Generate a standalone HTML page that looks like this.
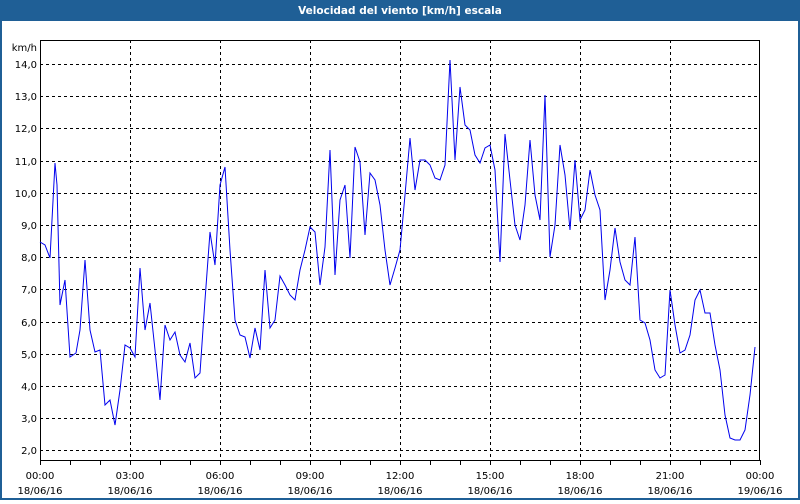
<!DOCTYPE html><html><head><style>body{margin:0;width:800px;height:500px;overflow:hidden;background:#fff;font-family:"DejaVu Sans","Liberation Sans",sans-serif}</style></head><body>
<svg width="800" height="500" xmlns="http://www.w3.org/2000/svg" font-family="DejaVu Sans, Liberation Sans, sans-serif" font-size="10">
<rect x="0" y="0" width="800" height="500" fill="#1f5f96"/>
<rect x="2" y="21" width="796" height="477" fill="#fff"/>
<text x="400" y="14" fill="#fff" font-weight="bold" text-anchor="middle" font-size="10.5">Velocidad del viento [km/h] escala</text>
<g stroke="#000" stroke-dasharray="3,3" stroke-width="1">
<line x1="40" x2="760" y1="64.5" y2="64.5"/><line x1="40" x2="760" y1="96.5" y2="96.5"/><line x1="40" x2="760" y1="128.5" y2="128.5"/><line x1="40" x2="760" y1="161.5" y2="161.5"/><line x1="40" x2="760" y1="193.5" y2="193.5"/><line x1="40" x2="760" y1="225.5" y2="225.5"/><line x1="40" x2="760" y1="257.5" y2="257.5"/><line x1="40" x2="760" y1="289.5" y2="289.5"/><line x1="40" x2="760" y1="322.5" y2="322.5"/><line x1="40" x2="760" y1="354.5" y2="354.5"/><line x1="40" x2="760" y1="386.5" y2="386.5"/><line x1="40" x2="760" y1="418.5" y2="418.5"/><line x1="40" x2="760" y1="450.5" y2="450.5"/>
<line x1="130.5" x2="130.5" y1="40" y2="460"/><line x1="220.5" x2="220.5" y1="40" y2="460"/><line x1="310.5" x2="310.5" y1="40" y2="460"/><line x1="400.5" x2="400.5" y1="40" y2="460"/><line x1="490.5" x2="490.5" y1="40" y2="460"/><line x1="580.5" x2="580.5" y1="40" y2="460"/><line x1="670.5" x2="670.5" y1="40" y2="460"/>
</g>
<rect x="40.5" y="40.5" width="719" height="420" fill="none" stroke="#000"/>
<g stroke="#000"><path d="M70.5 460v5M100.5 460v5M130.5 460v5M160.5 460v5M190.5 460v5M220.5 460v5M250.5 460v5M280.5 460v5M310.5 460v5M340.5 460v5M370.5 460v5M400.5 460v5M430.5 460v5M460.5 460v5M490.5 460v5M520.5 460v5M550.5 460v5M580.5 460v5M610.5 460v5M640.5 460v5M670.5 460v5M700.5 460v5M730.5 460v5M40.5 460v5M760.5 460v5"/></g>
<polyline fill="none" stroke="#0000ee" stroke-width="1" points="40,242 45,245 50,258 55,163 57,185 60,305 65,280 70,357 76,353 80,330 85,260 90,330 95,352 100,350 105,405 110,400 115,425 120,390 125,345 130,348 135,357 140,268 145,330 150,303 155,350 160,400 165,325 170,340 175,332 180,355 185,362 190,343 195,378 200,373 205,300 210,232 215,265 220,185 225,167 230,250 235,320 240,335 245,337 250,358 255,328 260,350 265,270 270,328 275,320 280,276 285,285 290,295 295,300 300,270 305,250 310,227 315,232 320,285 325,247 330,150 335,275 340,200 345,185 350,258 355,147 360,162 365,235 370,173 375,180 380,205 385,250 390,285 395,268 400,250 405,195 410,138 415,190 420,160 425,160 430,165 435,178 440,180 445,165 450,60 455,160 460,87 465,125 470,130 475,155 480,163 485,148 490,145 495,170 500,262 505,134 510,180 515,225 520,240 525,205 530,140 535,195 540,220 545,95 550,257 555,225 560,145 565,175 570,230 575,160 580,220 585,210 590,170 595,195 600,210 605,300 610,270 615,228 620,262 625,280 630,285 635,237 640,320 645,323 650,340 655,370 660,378 665,375 670,290 675,325 680,353 685,350 690,335 695,300 700,290 705,313 710,313 715,345 720,370 725,415 730,438 735,440 740,440 745,430 750,395 755,347"/>
<g text-anchor="end" fill="#000">
<text x="37" y="51">km/h</text>
<text x="37" y="68">14,0</text><text x="37" y="100">13,0</text><text x="37" y="132">12,0</text><text x="37" y="165">11,0</text><text x="37" y="197">10,0</text><text x="37" y="229">9,0</text><text x="37" y="261">8,0</text><text x="37" y="293">7,0</text><text x="37" y="326">6,0</text><text x="37" y="358">5,0</text><text x="37" y="390">4,0</text><text x="37" y="422">3,0</text><text x="37" y="454">2,0</text>
</g>
<g text-anchor="middle" fill="#000">
<text x="40" y="479">00:00</text><text x="40" y="494">18/06/16</text>
<text x="130" y="479">03:00</text><text x="130" y="494">18/06/16</text>
<text x="220" y="479">06:00</text><text x="220" y="494">18/06/16</text>
<text x="310" y="479">09:00</text><text x="310" y="494">18/06/16</text>
<text x="400" y="479">12:00</text><text x="400" y="494">18/06/16</text>
<text x="490" y="479">15:00</text><text x="490" y="494">18/06/16</text>
<text x="580" y="479">18:00</text><text x="580" y="494">18/06/16</text>
<text x="670" y="479">21:00</text><text x="670" y="494">18/06/16</text>
<text x="760" y="479">00:00</text><text x="760" y="494">19/06/16</text>
</g>
</svg></body></html>
